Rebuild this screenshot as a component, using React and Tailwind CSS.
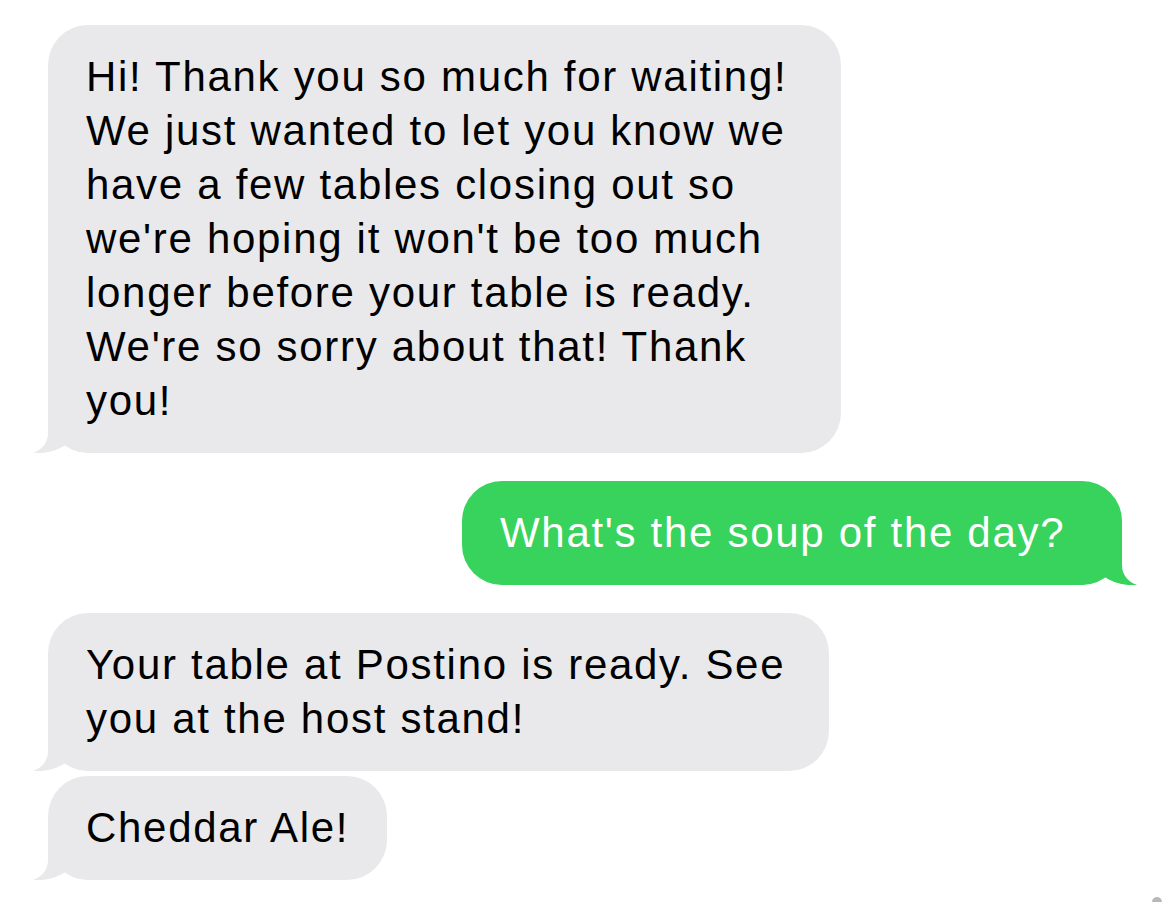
import React from "react"

const font = { fontFamily: '"Liberation Sans", Arial, sans-serif' }

function Tail({ side, color }) {
  // little curl at the bottom corner of the bubble
  const left = side === "left"
  return (
    <svg
      width="60"
      height="40"
      viewBox="0 0 60 40"
      className={left ? "absolute bottom-0 left-[-15px]" : "absolute bottom-0 right-[-15px] -scale-x-100"}
    >
      <path
        d="M15,0 L15,20 C15,31 8,37 0,40 C12,41 24,38 34,31 C42,37 50,40 60,40 L60,0 Z"
        fill={color}
      />
    </svg>
  )
}

function Bubble({ lines, side = "left", width, className = "" }) {
  const left = side === "left"
  return (
    <div
      className={
        "relative rounded-[40px] px-[38px] py-[25px] " +
        (left ? "bg-[#e9e9eb] text-black self-start ml-[48px] " : "bg-[#37d35c] text-white self-end mr-[48px] ") +
        width + " " + className
      }
    >
      <Tail side={side} color={left ? "#e9e9eb" : "#37d35c"} />
      <div className="relative text-[42px] tracking-[1.7px] leading-[54px] whitespace-nowrap">
        {lines.map((l, i) => (
          <div key={i}>{l}</div>
        ))}
      </div>
    </div>
  )
}

export default function App() {
  return (
    <div className="relative w-[1170px] h-[902px] bg-white overflow-hidden flex flex-col pt-[25px]" style={font}>
      <Bubble
        width="w-[793px]"
        lines={[
          "Hi! Thank you so much for waiting!",
          "We just wanted to let you know we",
          "have a few tables closing out so",
          "we're hoping it won't be too much",
          "longer before your table is ready.",
          "We're so sorry about that! Thank",
          "you!",
        ]}
      />
      <Bubble side="right" width="w-[660px]" className="mt-[28px]" lines={["What's the soup of the day?"]} />
      <Bubble
        width="w-[781px]"
        className="mt-[28px]"
        lines={["Your table at Postino is ready. See", "you at the host stand!"]}
      />
      <Bubble width="w-[339px]" className="mt-[5px]" lines={["Cheddar Ale!"]} />

      {/* scroll indicator peeking in the corner */}
      <div className="absolute right-[8px] bottom-[-5px] w-[10px] h-[10px] rounded-full bg-[#b8b8bc]" />
    </div>
  )
}
